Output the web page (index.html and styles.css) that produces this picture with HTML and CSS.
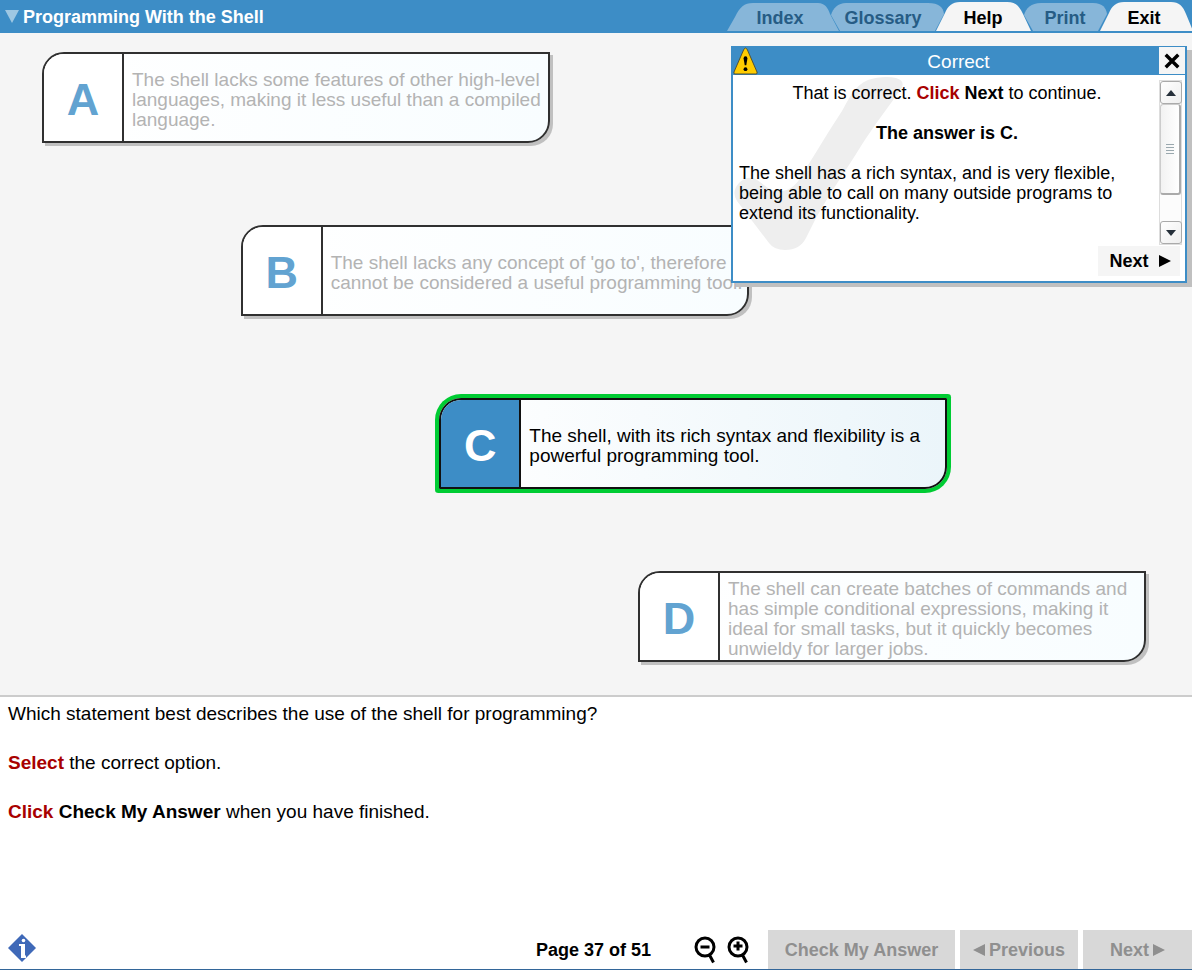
FILE: index.html
```html
<!DOCTYPE html>
<html lang="en">
<head>
<meta charset="utf-8">
<title>Programming With the Shell</title>
<link rel="stylesheet" href="styles.css">
</head>
<body>
<header class="topbar">
  <h1 class="title">
    <svg class="title-arrow" viewBox="0 0 14 13" aria-hidden="true"><path d="M0 0H14L7 13Z"/></svg>
    <span>Programming With the Shell</span>
  </h1>
  <nav class="tabs" aria-label="Course">
    <svg class="tab-shapes" viewBox="0 0 466 33" aria-hidden="true">
      <path class="tab-line" d="M0 32H466V33H0Z"/>
      <path class="tab-off" d="M1 31L9 17C14 7 18 3 27 3H92C99 3 102 8 104 14L113 31Z"/>
      <path class="tab-off" d="M114 31L105 15C107 8 112 3 120 3H202C213 3 217 7 218 14L209 31Z"/>
      <path class="tab-on" d="M210 31L219 13C222 6 226 2 234 2H281C290 2 293 6 297 14L305 31Z"/>
      <path class="tab-off" d="M307 31L298 15C300 8 305 3 315 3H367C377 3 380 8 381 14L372 31Z"/>
      <path class="tab-on" d="M374 31L383 13C386 6 390 2 398 2H445C453 2 457 6 460 14L467 31Z"/>
    </svg>
    <button class="tab tab-index" type="button" disabled>Index</button>
    <button class="tab tab-glossary" type="button" disabled>Glossary</button>
    <button class="tab tab-help" type="button">Help</button>
    <button class="tab tab-print" type="button" disabled>Print</button>
    <button class="tab tab-exit" type="button">Exit</button>
  </nav>
</header>

<main class="stage">
  <div class="options">
    <button class="option step-0" type="button"><span class="letter">A</span><span class="answer">The shell lacks some features of other high-level languages, making it less useful than a compiled language.</span></button>
    <button class="option step-1" type="button"><span class="letter">B</span><span class="answer">The shell lacks any concept of 'go to', therefore cannot be considered a useful programming tool.</span></button>
    <button class="option step-2 selected" type="button" aria-pressed="true"><span class="letter">C</span><span class="answer">The shell, with its rich syntax and flexibility is a powerful programming tool.</span></button>
    <button class="option step-3" type="button"><span class="letter">D</span><span class="answer">The shell can create batches of commands and has simple conditional expressions, making it ideal for small tasks, but it quickly becomes unwieldy for larger jobs.</span></button>
  </div>
</main>

<section class="popup" role="dialog" aria-labelledby="popup-title">
  <div class="popup-head">
    <svg class="warn" viewBox="0 0 26 29" aria-hidden="true">
      <path class="warn-body" d="M13 1Q14 1 15 3L25 26Q25.500 28 24 28H2Q.5 28 1 26L11 3Q12 1 13 1Z"/>
      <path d="M11 12Q11 9.500 13 9.500T15 12L13.800 19H12.200Z"/><circle cx="13" cy="23" r="2"/>
    </svg>
    <h2 class="popup-title" id="popup-title">Correct</h2>
    <button class="close" type="button" aria-label="Close">
      <svg viewBox="0 0 14 14" aria-hidden="true"><path d="M1.500 1.500L12.500 12.500M12.500 1.500L1.500 12.500"/></svg>
    </button>
  </div>
  <div class="popup-body">
    <svg class="tick" viewBox="0 0 172 176" aria-hidden="true"><path d="M135 5C144 2 155 1 163 3Q173 6 168 14C156 31 140 52 128 71C112 97 98 116 83 143L73 163C69 171 62 175 52 175Q41 175 36 168L4 126Q-2 117 6 108C11 103 18 101 24 105C32 110 36 116 44 116C54 117 62 112 67 103C81 81 97 54 109 36C116 23 122 10 135 5Z"/></svg>
    <div class="popup-text">
      <p class="center">That is correct. <strong class="verb">Click</strong> <strong>Next</strong> to continue.</p>
      <p class="center"><strong>The answer is C.</strong></p>
      <p>The shell has a rich syntax, and is very flexible, being able to call on many outside programs to extend its functionality.</p>
    </div>
    <div class="scroller">
      <button class="scroll-btn" type="button" aria-label="Scroll up"><svg viewBox="0 0 10 6" aria-hidden="true"><path d="M0 6L5 0L10 6Z"/></svg></button>
      <div class="scroll-thumb"><i></i><i></i><i></i><i></i></div>
      <button class="scroll-btn scroll-down" type="button" aria-label="Scroll down"><svg viewBox="0 0 10 6" aria-hidden="true"><path d="M0 0L5 6L10 0Z"/></svg></button>
    </div>
  </div>
  <div class="popup-foot">
    <button class="popup-next" type="button">Next <svg class="arrow" viewBox="0 0 12 12" aria-hidden="true"><path d="M0 0L12 6L0 12Z"/></svg></button>
  </div>
</section>

<section class="question">
  <p>Which statement best describes the use of the shell for programming?</p>
  <p><strong class="verb">Select</strong> the correct option.</p>
  <p><strong class="verb">Click</strong> <strong>Check My Answer</strong> when you have finished.</p>
</section>

<footer class="footer">
  <button class="info" type="button" aria-label="Information">
    <svg viewBox="0 0 28 28" aria-hidden="true"><path class="info-back" d="M14 0L28 14L14 28L0 14Z"/><path class="info-mark" d="M11 10H17V21L18 22V24H13V12H11Z"/><circle class="info-mark" cx="15.500" cy="6.500" r="1.800"/></svg>
  </button>
  <span class="page">Page 37 of 51</span>
  <button class="zoom" type="button" aria-label="Zoom out"><svg viewBox="0 0 22 28" aria-hidden="true"><circle cx="11" cy="11" r="9"/><path d="M6.500 11H15.500M15.500 19L19.500 26.500"/></svg></button>
  <button class="zoom" type="button" aria-label="Zoom in"><svg viewBox="0 0 22 28" aria-hidden="true"><circle cx="11" cy="11" r="9"/><path d="M6.500 10H15.500M11 5.500V14.500M15.500 19L19.500 26.500"/></svg></button>
  <div class="actions">
    <button class="action check" type="button" disabled>Check My Answer</button>
    <button class="action previous" type="button" disabled><svg class="arrow" viewBox="0 0 12 12" aria-hidden="true"><path d="M12 0L0 6L12 12Z"/></svg>Previous</button>
    <button class="action next" type="button" disabled>Next<svg class="arrow" viewBox="0 0 12 12" aria-hidden="true"><path d="M0 0L12 6L0 12Z"/></svg></button>
  </div>
</footer>
</body>
</html>
```
FILE: styles.css
```css
* { box-sizing: border-box; }
body {
  margin: 0;
  min-height: 100vh;
  display: flex;
  flex-direction: column;
  position: relative;
  background: #fff;
  color: #000;
  font-family: "Liberation Sans", Arial, sans-serif;
  font-size: 19px;
  line-height: 20px;
}
button {
  margin: 0;
  padding: 0;
  border: 0;
  background: none;
  color: inherit;
  font: inherit;
}
p, h1, h2 { margin: 0; }
svg { display: block; }
.verb { color: #a80000; }
.arrow { width: 12px; height: 12px; fill: currentColor; }

.topbar {
  display: flex;
  justify-content: space-between;
  height: 33px;
  background: #3d8dc6;
}
.title {
  display: flex;
  align-items: center;
  gap: 4px;
  padding-left: 5px;
  color: #fff;
  font-size: 18px;
}
.title-arrow { width: 14px; height: 13px; fill: #9ec7e3; }
.tabs { position: relative; display: flex; width: 466px; }
.tab-shapes { position: absolute; inset: 0; width: 466px; height: 33px; }
.tab-line { fill: #3d8dc6; }
.tab-off { fill: #87b6d9; }
.tab-on { fill: #f5f5f5; }
.tab { position: relative; padding-top: 3px; font-size: 18px; font-weight: bold; }
.tab:disabled { color: #265c85; }
.tab-index { width: 108px; }
.tab-glossary { width: 98px; }
.tab-help { width: 102px; }
.tab-print { width: 62px; }
.tab-exit { width: 96px; }

.stage {
  padding: 19px 46px 33px 42px;
  background: #f5f5f5;
  border-bottom: 2px solid #ccc;
}
.options { display: flex; flex-direction: column; gap: 82px; }
.option {
  display: flex;
  width: 508px;
  min-height: 91px;
  border: 2px solid #303030;
  border-radius: 22px 0 22px 0;
  background: linear-gradient(90deg, #fff, #f8fdff);
  box-shadow: 3px 3px 0 #c0c0c0;
  color: #b3b3b3;
  text-align: left;
}
.step-1 { margin-left: calc((100% - 508px) / 3); }
.step-2 { margin-left: calc((100% - 508px) / 3 * 2); }
.step-3 { margin-left: calc(100% - 508px); }
.letter {
  display: flex;
  align-items: center;
  justify-content: center;
  align-self: stretch;
  flex: none;
  width: 80px;
  padding-top: 4px;
  border-right: 2px solid #303030;
  border-radius: 20px 0 0 0;
  background: #fff;
  color: #62a3d1;
  font-size: 45px;
  font-weight: bold;
}
.answer { align-self: center; padding: 4px 0 0 8px; }
.selected {
  border-color: #111;
  border-radius: 22px 1px 22px 1px;
  background: linear-gradient(90deg, #fff, #ebf5fa);
  box-shadow: 0 0 0 4px #00cc33;
  color: #000;
}
.selected .letter { background: #3d8dc6; color: #fff; border-color: #111; }

.popup {
  position: absolute;
  top: 46px;
  right: 5px;
  width: 456px;
  border: 2px solid #3d8dc6;
  border-top-width: 1px;
  background: #fff;
  box-shadow: 5px 4px 0 #c0c0c0;
}
.popup-head { display: flex; height: 28px; background: #3d8dc6; }
.warn { width: 25px; height: 28px; flex: none; }
.warn-body { fill: #ffcc00; stroke: #4d4d33; stroke-width: 1; }
.popup-title {
  flex: 1;
  color: #fff;
  font-size: 19px;
  font-weight: normal;
  line-height: 30px;
  text-align: center;
}
.close { display: grid; place-items: center; width: 26px; height: 27px; background: #f5f5f5; }
.close svg { width: 16px; height: 16px; fill: none; stroke: #000; stroke-width: 3; }
.popup-body { position: relative; display: flex; gap: 4px; padding: 5px 3px 0 6px; }
.tick { position: absolute; left: 0; top: 0; width: 172px; height: 176px; fill: #eee; }
.popup-text {
  position: relative;
  display: flex;
  flex: 1;
  flex-direction: column;
  gap: 20px;
  padding-top: 3px;
  font-size: 18px;
}
.center { text-align: center; }
.scroller {
  display: flex;
  flex-direction: column;
  width: 23px;
  height: 165px;
  border: 1px solid #ddd;
  background: #fcfcfc;
}
.scroll-btn {
  display: grid;
  place-items: center;
  width: 22px;
  height: 23px;
  border: 1px solid #aaa;
  border-radius: 3px;
  background: linear-gradient(135deg, #fff, #eee);
}
.scroll-btn svg { width: 10px; height: 6px; fill: #26303a; }
.scroll-down { margin-top: auto; }
.scroll-thumb {
  display: flex;
  flex-direction: column;
  align-items: center;
  justify-content: center;
  gap: 2px;
  height: 91px;
  border: 1px solid #ccc;
  border-right: 2px solid #aaa;
  border-bottom: 2px solid #aaa;
  border-radius: 3px;
  background: linear-gradient(90deg, #f2f2f2, #fff);
}
.scroll-thumb i { width: 8px; height: 1px; background: #9aa8ae; }
.popup-foot { display: flex; justify-content: flex-end; padding: 1px 5px 5px; }
.popup-next {
  display: flex;
  align-items: center;
  justify-content: center;
  gap: 10px;
  width: 82px;
  height: 30px;
  padding-left: 2px;
  background: #f5f5f5;
  font-size: 18px;
  font-weight: bold;
}

.question { display: flex; flex: 1; flex-direction: column; gap: 29px; padding: 7px 8px 20px; }

.footer {
  display: flex;
  align-items: center;
  height: 40px;
  border-bottom: 1px solid #336699;
  font-size: 18px;
  font-weight: bold;
}
.info { margin-left: 8px; padding-bottom: 4px; }
.info svg { width: 28px; height: 28px; }
.info-back { fill: #3f69b8; }
.info-mark { fill: #fff; }
.page { margin-left: auto; margin-right: 43px; }
.zoom { margin-right: 11px; }
.zoom svg { width: 22px; height: 28px; fill: none; stroke: #000; stroke-width: 3; }
.actions { display: flex; gap: 5px; align-self: stretch; margin-left: 8px; }
.action {
  display: flex;
  align-items: center;
  justify-content: center;
  gap: 4px;
  background: #d8d8d8;
  color: #8f8f8f;
}
.check { width: 187px; }
.previous { width: 118px; }
.next { width: 109px; }
```
